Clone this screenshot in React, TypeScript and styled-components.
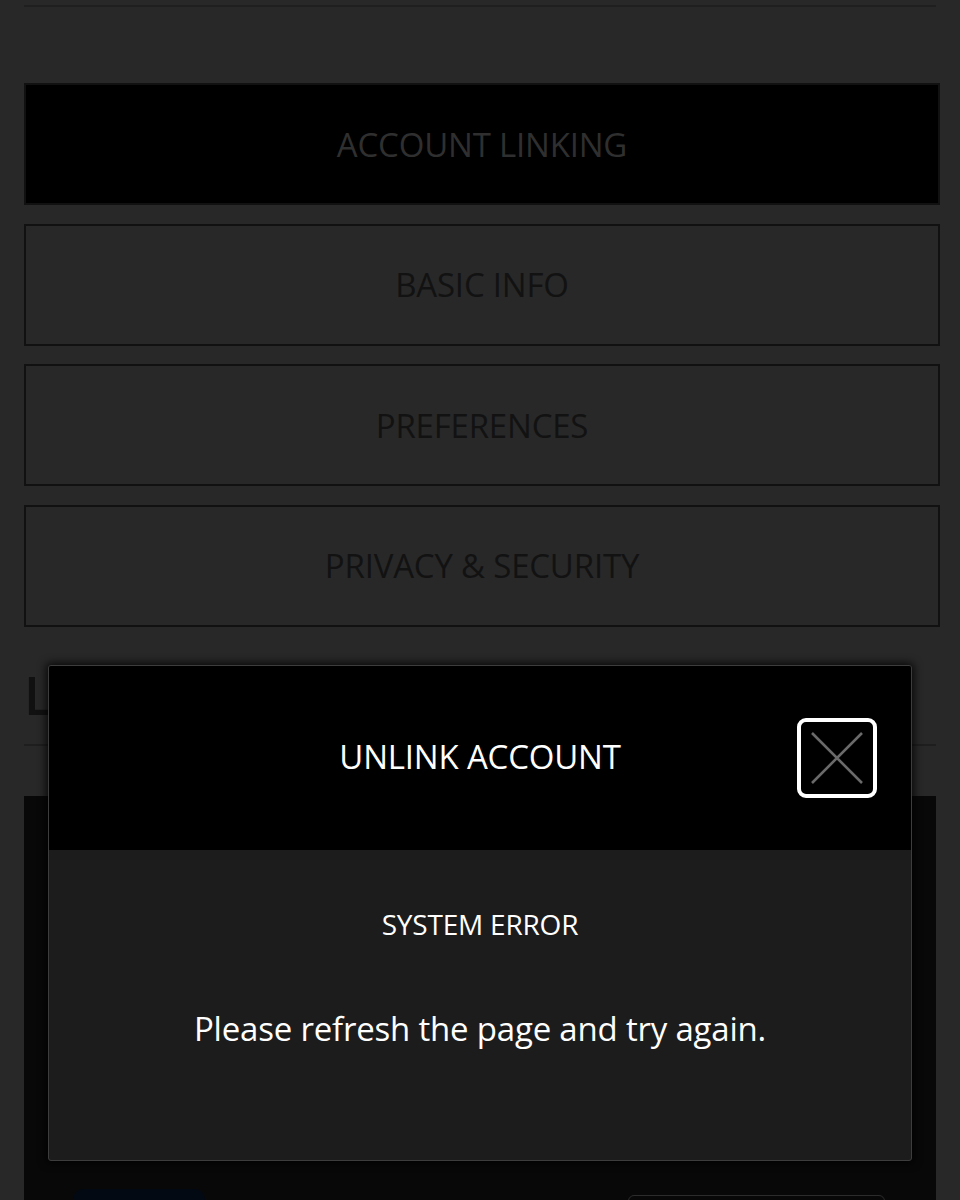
import styled, { createGlobalStyle } from "styled-components";

const GlobalStyle = createGlobalStyle`
  html, body {
    margin: 0;
    padding: 0;
    background: #282828;
    font-family: "Open Sans", "Noto Sans", sans-serif;
  }
`;

type NavButtonProps = {
  $active?: boolean;
};

const Page = styled.div`
  padding: 0 20px 0 24px;
  height: 1200px;
  box-sizing: border-box;
  overflow: hidden;
`;

const TopRule = styled.hr`
  margin: 5px 0 0;
  width: 912px;
  border: none;
  border-top: 2px solid #1f1f1f;
`;

const NavList = styled.nav`
  display: flex;
  flex-direction: column;
  gap: 18.67px;
  margin-top: 76px;
  width: 916px;
`;

const NavButton = styled.div<NavButtonProps>`
  height: 122px;
  box-sizing: border-box;
  display: flex;
  align-items: center;
  justify-content: center;
  border: 2px solid #111;
  background: ${(p) => (p.$active ? "#000" : "transparent")};
  color: ${(p) => (p.$active ? "#2f2f2f" : "#121212")};
  font-size: 33px;
  letter-spacing: -0.2px;
`;

const SectionTitle = styled.h2`
  margin: 38px 0 0;
  font-size: 52px;
  font-weight: 600;
  line-height: 60px;
  color: #111;
`;

const SectionRule = styled.hr`
  margin: 19px 0 0;
  width: 912px;
  border: none;
  border-top: 2px solid #1e1e1e;
`;

const AccountCard = styled.div`
  margin-top: 50px;
  width: 912px;
  height: 460px;
  background: #080808;
  display: flex;
  align-items: flex-start;
  justify-content: space-between;
  padding: 393px 51px 0 49px;
  box-sizing: border-box;
`;

const ProviderBadge = styled.div`
  width: 132px;
  height: 26px;
  border-radius: 10px;
  background: #030912;
`;

const CardButton = styled.div`
  width: 255px;
  height: 30px;
  margin-top: 6px;
  border: 1px solid #2c2c2c;
  border-radius: 6px;
`;

const Dialog = styled.div`
  position: absolute;
  left: 48px;
  top: 665px;
  width: 864px;
  height: 496px;
  box-sizing: border-box;
  display: flex;
  flex-direction: column;
  border: 1px solid #3d3d3d;
  border-radius: 3px;
  background: #1c1c1c;
  box-shadow: 0 0 8px 2px rgba(0, 0, 0, 0.8);
  overflow: hidden;
`;

const DialogHeader = styled.header`
  position: relative;
  height: 184px;
  flex-shrink: 0;
  background: #000;
  display: flex;
  align-items: center;
  justify-content: center;
`;

const DialogTitle = styled.h1`
  margin: 0 0 4px;
  font-size: 33px;
  font-weight: 400;
  color: #fff;
  letter-spacing: -0.2px;
`;

const CloseButton = styled.button`
  position: absolute;
  right: 34px;
  top: 52px;
  width: 80px;
  height: 80px;
  padding: 0;
  box-sizing: border-box;
  border: 4px solid #fff;
  border-radius: 9px;
  background: #000;
  display: flex;
  align-items: center;
  justify-content: center;
  cursor: pointer;
`;

const DialogBody = styled.div`
  flex: 1;
  display: flex;
  flex-direction: column;
  align-items: center;
  padding-top: 54px;
  color: #fff;
`;

const ErrorLabel = styled.p`
  margin: 0;
  font-size: 28px;
  line-height: 40px;
  letter-spacing: -0.2px;
`;

const ErrorMessage = styled.p`
  margin: 64px 0 0;
  font-size: 33px;
  line-height: 42px;
  letter-spacing: -0.2px;
`;

const navItems = ["ACCOUNT LINKING", "BASIC INFO", "PREFERENCES", "PRIVACY & SECURITY"];

export default function App() {
  return (
    <>
      <GlobalStyle />
      <Page>
        <TopRule />
        <NavList>
          {navItems.map((label, i) => (
            <NavButton key={label} $active={i === 0}>
              {label}
            </NavButton>
          ))}
        </NavList>
        <SectionTitle>LINKED ACCOUNTS</SectionTitle>
        <SectionRule />
        <AccountCard>
          <ProviderBadge />
          <CardButton />
        </AccountCard>
      </Page>

      <Dialog role="dialog">
        <DialogHeader>
          <DialogTitle>UNLINK ACCOUNT</DialogTitle>
          <CloseButton aria-label="Close">
            <svg width="52" height="52" viewBox="0 0 52 52">
              <path d="M1 1 L51 51 M51 1 L1 51" stroke="#6a6a6a" strokeWidth="2.6" />
            </svg>
          </CloseButton>
        </DialogHeader>
        <DialogBody>
          <ErrorLabel>SYSTEM ERROR</ErrorLabel>
          <ErrorMessage>Please refresh the page and try again.</ErrorMessage>
        </DialogBody>
      </Dialog>
    </>
  );
}
